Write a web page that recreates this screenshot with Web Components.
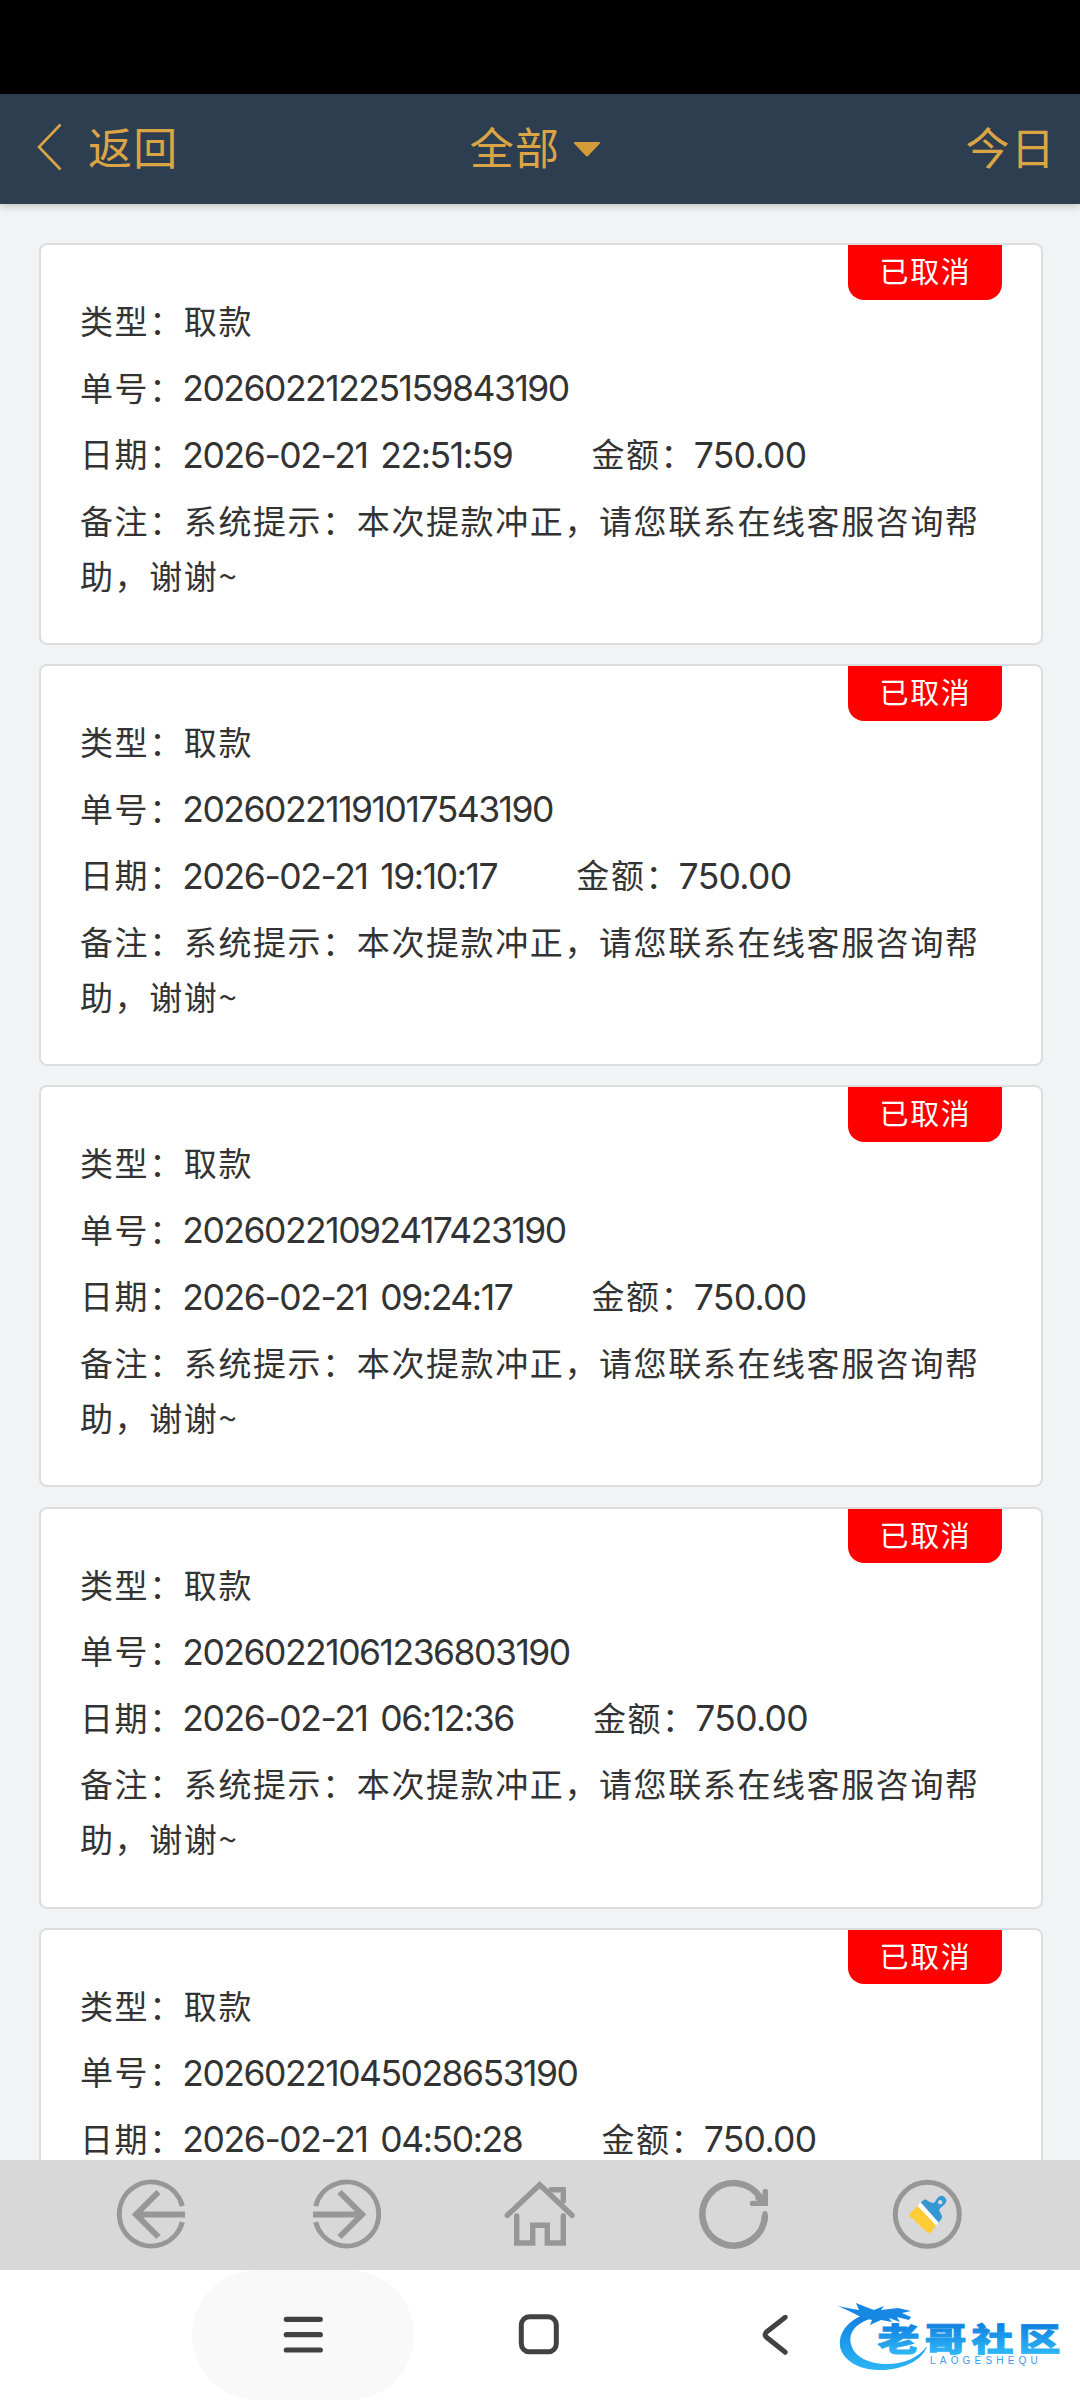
<!DOCTYPE html>
<html lang="zh-CN">
<head>
<meta charset="utf-8">
<title>全部</title>
<style>
  body {
    margin: 0;
    background: #f2f3f5;
    color: #333;
    font-family: "Noto Sans CJK SC", sans-serif;
  }
</style>
</head>
<body>
<record-app></record-app>

<script>
(function () {
  'use strict';

  function define(selector, template, render) {
    const $template = document.createElement('template');
    $template.innerHTML = template;
    customElements.define(selector, class extends HTMLElement {
      connectedCallback() {
        if (this.shadowRoot) {
          return;
        }
        this.attachShadow({ mode: 'open' }).appendChild(document.importNode($template.content, true));
        if (render) {
          render.call(this, this.shadowRoot);
        }
      }
    });
  }

  const icons = {
    back: `<path d="M70.3 31A32 32 0 1 0 70.3 47" stroke-width="5"/><path d="M73 39.5H26M46.5 17L24 39.5L46.5 62" stroke-width="6"/>`,
    forward: `<path d="M9.7 31A32 32 0 1 1 9.7 47" stroke-width="5"/><path d="M7 39.5H54M33.5 17L56 39.5L33.5 62" stroke-width="6"/>`,
    home: `<g stroke-width="5.4" stroke-linecap="round"><path d="M7.3 40.3L39.7 9.7L72 40.3"/><path d="M16.7 41V68H32.7V50.3H47.3V68H63.3V41"/><path d="M51 14.7H63.3V26"/></g>`,
    refresh: `<g stroke-width="6.6"><path d="M71 39.5A31.3 31.3 0 1 1 67 24"/><path d="M71.3 16.5V28.4H58.5" stroke-width="5.4" stroke-linecap="round"/><path d="M63 21L70 28"/><path d="M71 41V38.5" stroke-width="5" stroke-linecap="round"/></g>`,
    clean: `<circle cx="39.3" cy="39.3" r="32" stroke-width="5"/>
      <g stroke="none">
        <path fill="#3498d2" d="M32.7 27.3L36 24.7Q38.5 24.2 40 26L44.5 28Q47 28 48 25L50.5 22Q54 19.5 57 22.5Q60 26 56.5 29.5L52.5 33Q50.5 34.5 52 37L54 41Q54.5 43.5 52.5 45L50.5 47.5Z"/>
        <circle cx="52.2" cy="27.2" r="2.2" fill="#d8d8d8"/>
        <path fill="#fff" d="M32.5 27.5L50.5 47.5L48 50.5L29.5 31Z"/>
        <path fill="#fc3" d="M29.5 31L48 50.5L43 57.5L40.5 58L37 55.5L36 52.5L35 54L31.5 51L31 48L29.5 49L26.5 45.5L26 43L24 44L21.5 41.5L22 38.5Z"/>
      </g>`,
    recents: `<path d="M23.3 24.3H57.3M23.3 39.7H57.3M23.3 55H57.3" stroke-width="5.2" stroke-linecap="round"/>`,
    square: `<rect x="22.3" y="21.8" width="35" height="35" rx="8" stroke-width="5"/>`,
    chevron: `<path d="M50.3 22.3L31.5 37Q28.7 39.7 31.5 42.3L50.3 57.3" stroke-width="5" stroke-linecap="round"/>`
  };

  define('ui-icon', `
    <style>
      :host { display: block; width: 80px; height: 80px; }
      svg { display: block; fill: none; stroke: currentColor; }
    </style>
    <svg width="80" height="80" viewBox="0 0 80 80"></svg>
  `, function (root) {
    root.querySelector('svg').innerHTML = icons[this.getAttribute('name')];
  });

  define('page-header', `
    <style>
      :host {
        display: grid;
        grid-template-columns: 1fr auto 1fr;
        align-items: center;
        height: 110px;
        padding: 0 25px 6px 37px;
        box-sizing: border-box;
        background: #2d3e50;
        color: #dba546;
        font-size: 44px;
        letter-spacing: 1.2px;
        line-height: 64px;
        box-shadow: 0 2px 8px rgba(0, 0, 0, .22);
        position: relative;
      }
      div { display: flex; align-items: center; }
      svg { display: block; fill: none; stroke: currentColor; }
      .back { gap: 26px; }
      .back svg { margin-top: 2px; }
      .title { gap: 13px; padding-right: 21px; }
      .range { justify-content: flex-end; margin-right: -1px; }
      .caret { fill: #d39c38; stroke: #d39c38; margin-top: 6px; }
    </style>
    <div class="back">
      <svg width="25" height="48" viewBox="0 0 25 48"><path d="M23.5 1.5L2 24L23.5 46.5" stroke-width="2.6"/></svg>
      <slot name="back"></slot>
    </div>
    <div class="title">
      <slot></slot>
      <svg class="caret" width="28" height="17" viewBox="0 0 28 17"><path d="M2 2H26L14 14.5Z" stroke-width="2" stroke-linejoin="round"/></svg>
    </div>
    <div class="range"><slot name="range"></slot></div>
  `);

  define('status-badge', `
    <style>
      :host {
        display: block;
        width: 154px;
        height: 54.5px;
        border-radius: 0 0 16px 16px;
        background: #f00;
        color: #fff;
        font-size: 29px;
        letter-spacing: 1.6px;
        line-height: 51px;
        text-indent: 1px;
        text-align: center;
      }
    </style>
    <slot></slot>
  `);

  define('record-card', `
    <style>
      :host {
        display: block;
        position: relative;
        box-sizing: border-box;
        height: 402px;
        padding: 48px 39px 0;
        border: 2px solid #dcdddf;
        border-radius: 8px;
        background: #fff;
        font-size: 33px;
        letter-spacing: 1.6px;
        line-height: 55px;
      }
      status-badge { position: absolute; top: 0; right: 39px; }
      .row { display: flex; height: 55px; margin-bottom: 11.5px; }
      .num {
        margin-left: -1.5px;
        padding-top: 1.5px;
        font-family: Inter, sans-serif;
        font-size: 35.5px;
        letter-spacing: -1.5px;
      }
      .date { margin-right: 79px; letter-spacing: -1.4px; word-spacing: 4px; }
      .amount { letter-spacing: -.7px; }
      .note { width: 910px; }
    </style>
    <status-badge>已取消</status-badge>
    <div class="row"><span>类型：</span><span>取款</span></div>
    <div class="row"><span>单号：</span><span class="num" id="order"></span></div>
    <div class="row">
      <span>日期：</span><span class="num date" id="date"></span>
      <span>金额：</span><span class="num amount" id="amount"></span>
    </div>
    <div class="note"><slot></slot></div>
  `, function (root) {
    ['order', 'date', 'amount'].forEach(key => {
      root.getElementById(key).textContent = this.getAttribute(key);
    });
  });

  define('tool-bar', `
    <style>
      :host {
        display: grid;
        grid-template-columns: repeat(5, 194px);
        justify-content: center;
        justify-items: center;
        align-items: center;
        height: 110px;
        background: #d8d8d8;
        color: #979797;
      }
    </style>
    <slot></slot>
  `);

  define('brand-mark', `
    <style>
      :host { display: block; width: 240px; height: 100px; }
      svg { display: block; }
      text { font-family: "Noto Sans CJK SC", sans-serif; }
      .latin { font-family: "Liberation Sans", sans-serif; font-size: 10px; letter-spacing: 4.2px; }
    </style>
    <svg width="240" height="100" viewBox="0 0 240 100">
      <defs>
        <linearGradient id="blue" x1="0" y1="0" x2="0" y2="1">
          <stop offset="0" stop-color="#1180e0"/>
          <stop offset="1" stop-color="#2cb5f5"/>
        </linearGradient>
        <linearGradient id="ink" gradientUnits="userSpaceOnUse" x1="0" y1="-30" x2="0" y2="2">
          <stop offset="0" stop-color="#1180e0"/>
          <stop offset="1" stop-color="#2cb5f5"/>
        </linearGradient>
      </defs>
      <path fill="url(#blue)" d="M33 25C14 33 7 47 11 60C17 75 36 81 55 80C77 78 93 69 97 56C89 67 75 74 57 74C39 74 24 67 21 54C18 42 27 33 40 29Z"/>
      <path fill="#1687e3" d="M8 16L20 18.5L29 20L26 13L36 17L44 20L54 16L51 20L68 18L81 21L72 23L81 27L79 30L67 27L70 32L59 28L62 32L51 30L40 35L42 30L31 27L19 21Z"/>
      <text transform="translate(47.5 61) scale(1.2 .91)" font-size="35" font-weight="900" letter-spacing="4.2" fill="url(#ink)" stroke="url(#ink)" stroke-width=".9">老哥社区</text>
      <text class="latin" x="100" y="73.5" fill="#3f9be6">LAOGESHEQU</text>
    </svg>
  `);

  define('system-nav', `
    <style>
      :host {
        display: flex;
        gap: 14px;
        position: relative;
        height: 130px;
        padding-left: 192px;
        background: #fff;
        color: #424242;
      }
      span { display: flex; align-items: center; justify-content: center; width: 222px; }
      .pressed { border-radius: 65px; background: #f9f9f9; }
      brand-mark { position: absolute; left: 830px; top: 20px; }
    </style>
    <span class="pressed"><ui-icon name="recents"></ui-icon></span>
    <span><ui-icon name="square"></ui-icon></span>
    <span><ui-icon name="chevron"></ui-icon></span>
    <brand-mark></brand-mark>
  `);

  const records = [
    ['20260221225159843190', '2026-02-21 22:51:59'],
    ['20260221191017543190', '2026-02-21 19:10:17'],
    ['20260221092417423190', '2026-02-21 09:24:17'],
    ['20260221061236803190', '2026-02-21 06:12:36'],
    ['20260221045028653190', '2026-02-21 04:50:28']
  ];

  define('record-app', `
    <style>
      :host { display: flex; flex-direction: column; height: 2400px; overflow: hidden; }
      .status { height: 94px; background: #000; }
      main {
        display: flex;
        flex-direction: column;
        flex: 1;
        min-height: 0;
        gap: 19.2px;
        padding: 39px 37px 0 39px;
        overflow: hidden;
      }
      record-card { flex: none; }
    </style>
    <div class="status"></div>
    <page-header>
      <span slot="back">返回</span>
      <span>全部</span>
      <span slot="range">今日</span>
    </page-header>
    <main></main>
    <tool-bar>
      <ui-icon name="back"></ui-icon>
      <ui-icon name="forward"></ui-icon>
      <ui-icon name="home"></ui-icon>
      <ui-icon name="refresh"></ui-icon>
      <ui-icon name="clean"></ui-icon>
    </tool-bar>
    <system-nav></system-nav>
  `, function (root) {
    root.querySelector('main').innerHTML = records.map(([order, date]) => `
      <record-card order="${order}" date="${date}" amount="750.00">备注：系统提示：本次提款冲正，请您联系在线客服咨询帮助，谢谢~</record-card>
    `).join('');
  });
}());
</script>
</body>
</html>
